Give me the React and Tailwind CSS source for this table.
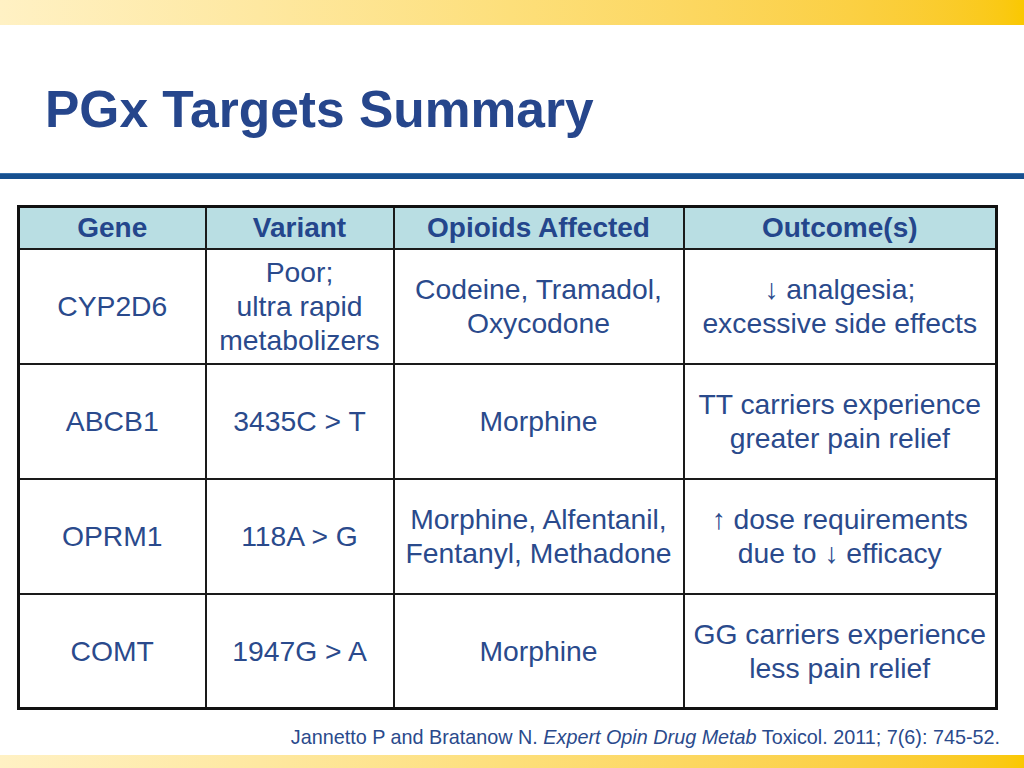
import React from 'react';

const rows = [
  { gene: 'CYP2D6', variant: ['Poor;', 'ultra rapid', 'metabolizers'], opioids: ['Codeine, Tramadol,', 'Oxycodone'], outcome: ['↓ analgesia;', 'excessive side effects'] },
  { gene: 'ABCB1', variant: ['3435C > T'], opioids: ['Morphine'], outcome: ['TT carriers experience', 'greater pain relief'] },
  { gene: 'OPRM1', variant: ['118A > G'], opioids: ['Morphine, Alfentanil,', 'Fentanyl, Methadone'], outcome: ['↑ dose requirements', 'due to ↓ efficacy'] },
  { gene: 'COMT', variant: ['1947G > A'], opioids: ['Morphine'], outcome: ['GG carriers experience', 'less pain relief'] },
];

function Lines({ items }) {
  return items.map((t, i) => (
    <span key={i} className="block whitespace-nowrap">{t}</span>
  ));
}

export default function App() {
  return (
    <div
      className="w-[1024px] h-[768px] bg-white flex flex-col overflow-hidden text-[#2a4a8c]"
      style={{ fontFamily: '"Liberation Sans", Arial, sans-serif' }}
    >
      {/* top band */}
      <div className="flex-none h-[25px] bg-gradient-to-r from-[#fff1c4] via-[#fddf7a] to-[#fac800]" />

      {/* title */}
      <div className="flex-none h-[148px] pl-[45px] pt-[55px]">
        <h1 className="text-[51.5px] leading-[58px] font-bold text-[#26468c]">PGx Targets Summary</h1>
      </div>
      <div className="flex-none h-[6px] bg-[#17508f] border-t border-[#3a72ad]" />

      {/* table */}
      <div className="flex-none pl-[17px] pt-[26px]">
        <table className="border-collapse border-[3px] border-[#111] w-[981px] table-fixed text-center">
          <colgroup>
            <col className="w-[187px]" />
            <col className="w-[188px]" />
            <col className="w-[290px]" />
            <col />
          </colgroup>
          <thead>
            <tr className="bg-[#b9dee3] h-[42px]">
              {['Gene', 'Variant', 'Opioids Affected', 'Outcome(s)'].map((h) => (
                <th key={h} className="border-2 border-[#1a1a1a] text-[28px] leading-[30px] font-bold text-[#24468c]">
                  {h}
                </th>
              ))}
            </tr>
          </thead>
          <tbody className="text-[28.3px] leading-[34px]">
            {rows.map((r) => (
              <tr key={r.gene} className="h-[115px]">
                <td className="border-2 border-[#1a1a1a] p-0 align-middle">{r.gene}</td>
                <td className="border-2 border-[#1a1a1a] p-0 align-middle"><Lines items={r.variant} /></td>
                <td className="border-2 border-[#1a1a1a] p-0 align-middle"><Lines items={r.opioids} /></td>
                <td className="border-2 border-[#1a1a1a] p-0 align-middle"><Lines items={r.outcome} /></td>
              </tr>
            ))}
          </tbody>
        </table>
      </div>

      {/* citation */}
      <div className="flex-1 flex items-center justify-end pr-[24px] pt-[10px] text-[19.8px] text-[#2a4a8c]">
        <span>
          Jannetto P and Bratanow N. <i>Expert Opin Drug Metab</i> Toxicol. 2011; 7(6): 745-52.
        </span>
      </div>

      {/* bottom band */}
      <div className="flex-none h-[13px] bg-gradient-to-r from-[#fff1c4] via-[#fddf7a] to-[#fac800]" />
    </div>
  );
}
